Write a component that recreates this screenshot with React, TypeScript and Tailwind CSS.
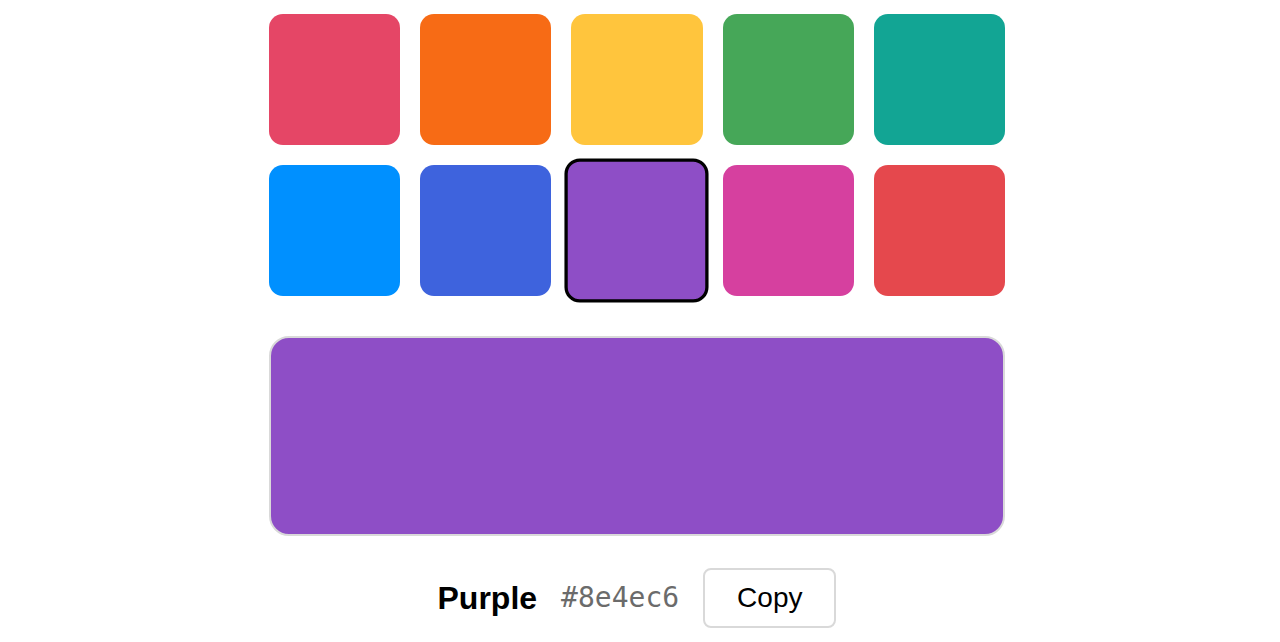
import React, { useState } from 'react';

type Swatch = { name: string; hex: string };

const swatches: Swatch[] = [
  { name: 'Ruby', hex: '#e54666' },
  { name: 'Orange', hex: '#f76b15' },
  { name: 'Amber', hex: '#ffc53d' },
  { name: 'Grass', hex: '#46a758' },
  { name: 'Teal', hex: '#12a594' },
  { name: 'Blue', hex: '#0090ff' },
  { name: 'Indigo', hex: '#3e63dd' },
  { name: 'Purple', hex: '#8e4ec6' },
  { name: 'Pink', hex: '#d6409f' },
  { name: 'Red', hex: '#e5484d' },
];

export default function App() {
  const [selected, setSelected] = useState(7);
  const current = swatches[selected];

  return (
    <div className="min-h-screen bg-white pr-[6px] flex flex-col items-center justify-center font-['Liberation_Sans',Arial,sans-serif]">
      {/* Swatch grid */}
      <div className="grid grid-cols-5 gap-5 w-[736px]">
        {swatches.map((s, i) => (
          <button
            key={s.name}
            onClick={() => setSelected(i)}
            aria-label={s.name}
            className={`aspect-square rounded-[14px] ${
              i === selected ? 'border-[3.5px] border-black scale-110' : ''
            }`}
            style={{ backgroundColor: s.hex }}
          />
        ))}
      </div>

      {/* Preview */}
      <div
        className="mt-10 w-[736px] h-[200px] rounded-[20px] border-2 border-[#d9d9d9]"
        style={{ backgroundColor: current.hex }}
      />

      {/* Info row */}
      <div className="mt-8 flex items-center gap-6">
        <span className="text-[32px] font-bold text-black">{current.name}</span>
        <span className="text-[28px] text-[#6b6b6b] font-['DejaVu_Sans_Mono',monospace]">{current.hex}</span>
        <button className="h-[60px] px-8 rounded-lg border-2 border-[#d9d9d9] bg-white text-[28px] text-black">
          Copy
        </button>
      </div>
    </div>
  );
}
